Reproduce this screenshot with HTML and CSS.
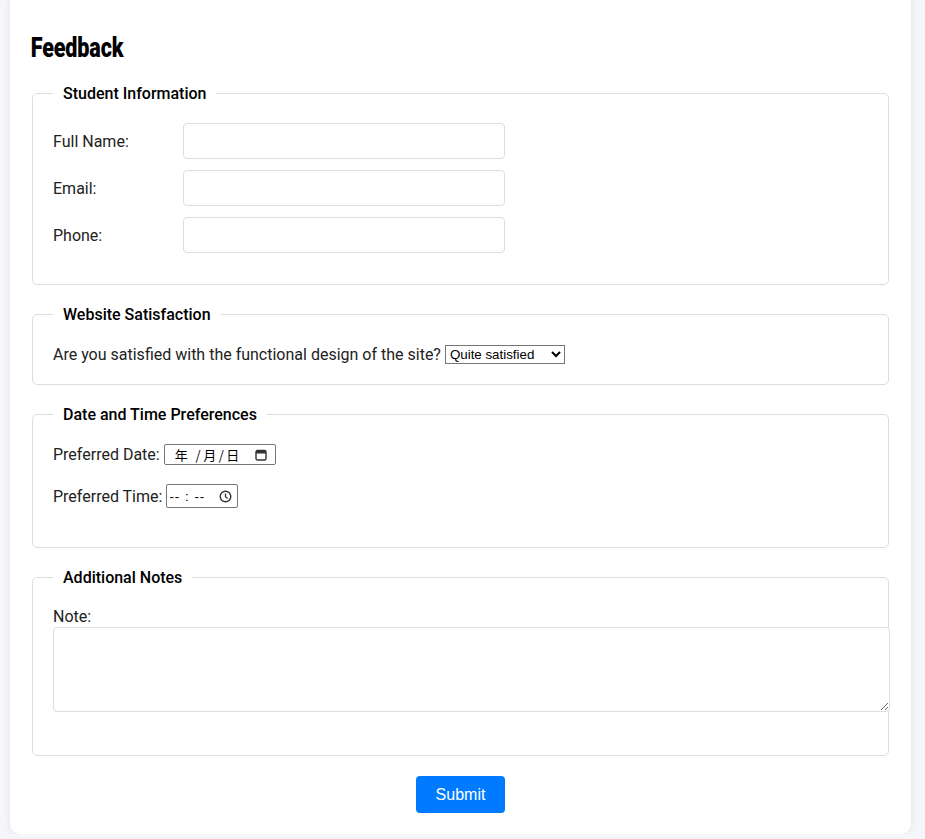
FILE: index.html
```html
<!DOCTYPE html>
<html lang="en">
<head>
<meta charset="utf-8">
<title>Feedback</title>
<link rel="stylesheet" href="styles.css">
</head>
<body>
<div class="container">
  <h1 class="title">Feedback</h1>
  <form class="form">
    <fieldset class="group">
      <legend class="legend">Student Information</legend>
      <div class="row">
        <label class="row-label" for="name">Full Name:</label>
        <input class="text-input" id="name" type="text">
      </div>
      <div class="row">
        <label class="row-label" for="email">Email:</label>
        <input class="text-input" id="email" type="email">
      </div>
      <div class="row">
        <label class="row-label" for="phone">Phone:</label>
        <input class="text-input" id="phone" type="tel">
      </div>
    </fieldset>

    <fieldset class="group">
      <legend class="legend">Website Satisfaction</legend>
      <div class="line sat-line">
        <label for="sat">Are you satisfied with the functional design of the site?</label>
        <select class="select" id="sat">
          <option>Very satisfied</option>
          <option selected>Quite satisfied</option>
          <option>Not satisfied</option>
        </select>
      </div>
    </fieldset>

    <fieldset class="group">
      <legend class="legend">Date and Time Preferences</legend>
      <div class="line dt-line">
        <label>Preferred Date:</label>
        <span class="fake-input date-input"><span class="dt-text">年 /月/日</span><svg class="dt-icon" width="12" height="12" viewBox="0 0 12 12"><rect x="1" y="1.5" width="10" height="9.5" rx="1.5" fill="none" stroke="#333" stroke-width="1.4"/><rect x="1" y="1.5" width="10" height="3" fill="#333"/></svg></span>
      </div>
      <div class="line dt-line">
        <label>Preferred Time:</label>
        <span class="fake-input time-input"><span class="dt-text tm">-- : --</span><svg class="dt-icon" width="13" height="13" viewBox="0 0 13 13"><circle cx="6.5" cy="6.5" r="5.3" fill="none" stroke="#333" stroke-width="1.4"/><path d="M6.5 3.5V6.8L8.6 8.4" fill="none" stroke="#333" stroke-width="1.3"/></svg></span>
      </div>
    </fieldset>

    <fieldset class="group">
      <legend class="legend">Additional Notes</legend>
      <label class="block-label" for="note">Note:</label>
      <textarea class="textarea" id="note"></textarea>
    </fieldset>

    <div class="actions">
      <button class="submit" type="button">Submit</button>
    </div>
  </form>
</div>
</body>
</html>
```
FILE: styles.css
```css
html, body {
  margin: 0;
  padding: 0;
}
body {
  background: #f5f6f9;
  font-family: Roboto, "Liberation Sans", Arial, sans-serif;
  font-size: 16px;
  color: #222;
}
.container {
  width: 861px;
  margin-left: 10px;
  margin-top: -12px;
  padding: 20px 20px 21px;
  background: #fff;
  border-radius: 10px;
  box-shadow: 0 0 8px rgba(0, 0, 0, 0.08);
}
.title {
  font-family: Roboto, sans-serif;
  font-weight: 900;
  font-size: 28px;
  line-height: 33px;
  margin: 23px 0 20px 0;
  padding-left: 1px;
  display: inline-block;
  transform: scaleX(0.77);
  transform-origin: left center;
  letter-spacing: -0.2px;
  color: #000;
}
.form {
  margin: 0;
}
.group {
  margin: 0 2px 20px;
  padding: 20px;
  border: 1px solid #ddd;
  border-radius: 5px;
}
.legend {
  padding: 0 10px;
  font-weight: 500;
  color: #000;
  line-height: 19px;
  font-size: 16px;
}
.row {
  display: flex;
  align-items: center;
  margin-bottom: 11px;
}
.row-label {
  width: 130px;
  flex: none;
}
.text-input {
  box-sizing: border-box;
  width: 322px;
  height: 36px;
  border: 1px solid #ddd;
  border-radius: 4px;
  margin: 0;
  padding: 8px 10px;
  font: inherit;
}
.line {
  line-height: 21px;
}
.sat-line {
  height: 20px;
}
.select {
  width: 120px;
  height: 19px;
  font-family: "Liberation Sans", Arial, sans-serif;
  font-size: 13.33px;
  vertical-align: 1px;
  margin: 0;
  padding: 0;
  border: 1px solid #767676;
  border-radius: 0;
  background: #fff;
  color: #000;
}
.dt-line {
  margin-bottom: 19px;
  display: flex;
  align-items: center;
  gap: 4px;
}
.fake-input {
  box-sizing: border-box;
  display: inline-flex;
  align-items: center;
  justify-content: space-between;
  border: 1px solid #767676;
  border-radius: 2px;
  background: #fff;
  color: #000;
  font-size: 13.33px;
}
.date-input {
  width: 112px;
  height: 21px;
  padding: 0 8px 0 10px;
}
.date-input .dt-text {
  font-family: "Noto Sans CJK SC", sans-serif;
  font-size: 13px;
  letter-spacing: 2.5px;
  white-space: pre;
}
.time-input {
  width: 72px;
  height: 24px;
  padding: 0 5px 0 2px;
}
.tm {
  font-family: "Liberation Sans", Arial, sans-serif;
  letter-spacing: 1px;
  white-space: pre;
}
.dt-icon {
  display: block;
}
.block-label {
  display: block;
  line-height: 20px;
}
.textarea {
  display: block;
  width: 100%;
  box-sizing: content-box;
  padding: 0 10px;
  height: 83px;
  border: 1px solid #ddd;
  border-radius: 4px;
  margin: 0 0 23px;
  font: inherit;
}
.actions {
  display: flex;
  justify-content: center;
}
.submit {
  width: 89px;
  height: 37px;
  background: #007bff;
  color: #fff;
  border: none;
  border-radius: 4px;
  font-family: "Liberation Sans", Arial, sans-serif;
  font-size: 16px;
  cursor: pointer;
}
```
